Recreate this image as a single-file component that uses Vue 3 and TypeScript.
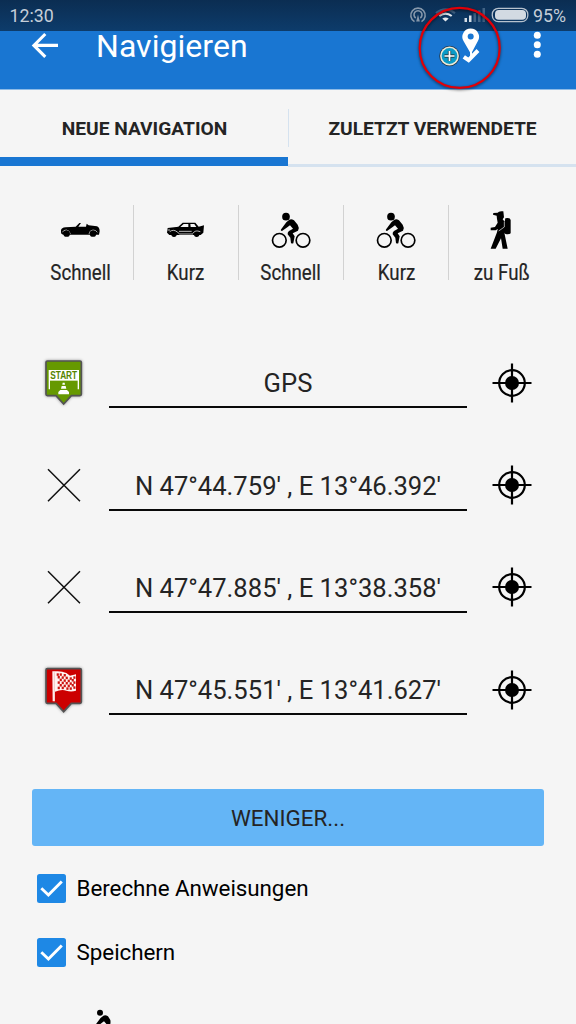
<script setup lang="ts">
import { ref } from 'vue'

type ModeIcon = 'cabrio' | 'sedan' | 'bike' | 'walk'
interface Mode { icon: ModeIcon; label: string }
interface Stop { kind: 'start' | 'via' | 'end'; text: string }
interface Option { label: string; checked: boolean }

const modes: Mode[] = [
  { icon: 'cabrio', label: 'Schnell' },
  { icon: 'sedan', label: 'Kurz' },
  { icon: 'bike', label: 'Schnell' },
  { icon: 'bike', label: 'Kurz' },
  { icon: 'walk', label: 'zu Fuß' },
]
const stops: Stop[] = [
  { kind: 'start', text: 'GPS' },
  { kind: 'via', text: "N 47°44.759' , E 13°46.392'" },
  { kind: 'via', text: "N 47°47.885' , E 13°38.358'" },
  { kind: 'end', text: "N 47°45.551' , E 13°41.627'" },
]
const options = ref<Option[]>([
  { label: 'Berechne Anweisungen', checked: true },
  { label: 'Speichern', checked: true },
])
const flagSquares = [
  [90, 69], [102, 71], [84, 77], [96, 78], [108, 79], [90, 85], [102, 87],
  [84, 93], [96, 94], [108, 95], [90, 101], [102, 103], [84, 109], [96, 109], [81, 69],
  [120, 81], [131, 78], [114, 88], [126, 86], [120, 96], [131, 93], [114, 103],
  [126, 101], [120, 111], [131, 108], [110, 111],
]
</script>

<template>
  <div class="screen">
    <div class="status">
      <span class="clock">12:30</span>
      <svg class="status-icons" viewBox="0 0 128 31" width="128" height="31">
        <g fill="none" stroke="#8798ab" stroke-width="1.6">
          <path d="M5.500 21.600A7.200 7.200 0 1 1 12.500 21.600M6.700 18A4 4 0 1 1 11.300 18" />
          <path d="M9 14.500 7.200 21.500H10.800Z" fill="#8798ab" stroke="none" />
        </g>
        <g fill="none" stroke-width="2.200">
          <path d="M27 13.200Q36.500 5.800 46 13.200" stroke="#3d5f82" />
          <path d="M30.300 16Q36.500 11.200 42.700 16" stroke="#e4e9ee" />
          <path d="M33.300 18.600Q36.500 16.400 39.700 18.600L36.500 21.500Z" fill="#e4e9ee" stroke="none" />
        </g>
        <path d="M55.500 18h2.500v4h-2.500z M60 15.500h2.500V22H60z" fill="#d3dce5" />
        <path d="M64.500 13H67v9h-2.500z M69 10.500h2.500V22H69z M73.500 8H76v14h-2.500z" fill="#416284" />
        <rect x="83.300" y="8.300" width="35.500" height="13.300" rx="6" fill="none" stroke="#b7c2ce" stroke-width="1.300" />
        <rect x="86" y="10" width="31" height="9.800" rx="3.800" fill="#d2dae2" />
      </svg>
      <span class="percent">95%</span>
    </div>

    <header class="bar">
      <svg class="back" viewBox="0 0 28 26" width="28" height="26">
        <path d="M27 13.400H3M14.300 2 2.900 13.400 14.300 24.800" fill="none" stroke="#fff" stroke-width="3.100" />
      </svg>
      <h1>Navigieren</h1>
      <svg class="more" viewBox="0 0 10 28" width="10" height="28">
        <circle cx="5.300" cy="4.200" r="3.500" /><circle cx="5.300" cy="13.700" r="3.500" /><circle cx="5.300" cy="23.200" r="3.500" />
      </svg>
    </header>

    <svg class="highlight" viewBox="0 0 100 100" width="100" height="100">
      <path d="M60.700 28.500A8.300 8.300 0 0 1 67.900 41L61 54 53.500 41A8.300 8.300 0 0 1 60.700 28.500Z" fill="#fff" />
      <circle cx="60.700" cy="36.600" r="3" fill="#1976d2" />
      <path d="M60.900 45 61.100 57" stroke="#fff" stroke-width="2" />
      <path d="M53.800 56.800 58.600 60.200 68 50.500" fill="none" stroke="#fff" stroke-width="4" />
      <circle cx="39.500" cy="56" r="10.300" fill="#243b4e" />
      <circle cx="39.500" cy="56" r="9.400" fill="#eee9d8" />
      <circle cx="39.500" cy="56" r="7.900" fill="#0b9bc8" />
      <path d="M39.500 51v10M34.500 56h10" stroke="#21424e" stroke-width="3.300" />
      <path d="M39.500 51v10M34.500 56h10" stroke="#fff" stroke-width="1.700" />
      <circle class="ring" cx="49.700" cy="47.900" r="40" fill="none" stroke="#e00008" stroke-width="2.200" />
    </svg>

    <nav class="tabs">
      <div class="tab active"><span>NEUE NAVIGATION</span></div>
      <div class="tab"><span>ZULETZT VERWENDETE</span></div>
    </nav>

    <section class="modes">
      <div v-for="(mode, i) in modes" :key="i" class="mode">
        <svg v-if="mode.icon === 'cabrio'" viewBox="61 48 120 114" width="40" height="38">
          <path d="M64 106Q65 98 78 97L108 95 119 84 124 84 116 95H139L141 86 147 91 172 94Q180 97 180 109L178 119H70L64 115Z" />
          <path d="M68 112Q71 105 80 105 90 106 92 117M148 117Q150 105 160 105 169 105 173 112" fill="none" stroke="#f5f5f5" stroke-width="2" />
          <circle cx="81" cy="116" r="9.500" /><circle cx="160" cy="116" r="9.500" />
        </svg>
        <svg v-else-if="mode.icon === 'sedan'" viewBox="379 48 120 114" width="40" height="38">
          <path d="M384 99 416 95 429 83H467L477 95 493 91 491 113 483 120H389L382 113Z" />
          <path d="M422 96 432 87H446V96ZM452 87H464L470 96H453Z" fill="#f5f5f5" />
          <path d="M384 105H391M390 110Q402 101 414 112L420 117H460M418 109H456M460 115Q466 104 482 110" fill="none" stroke="#f5f5f5" stroke-width="2.300" />
          <circle cx="403" cy="118" r="8" /><circle cx="471" cy="118" r="8" />
        </svg>
        <svg v-else-if="mode.icon === 'bike'" viewBox="92 48 120 114" width="40" height="38">
          <circle cx="137" cy="65" r="11.500" />
          <g fill="none" stroke="#000" stroke-width="5"><circle cx="117" cy="136" r="20.500" /><circle cx="188" cy="136" r="20.500" /></g>
          <path d="M138 82 147 74Q153 70 161 76L172 89Q178 98 173 107L157 115 163 124 159 145Q155 147 152 144L150 128 142 118Q141 112 146 108L158 101 149 91 141 97 125 108Q119 107 123 102Z" />
        </svg>
        <svg v-else viewBox="727 48 120 114" width="40" height="38">
          <path d="M761 54 774 53Q777 47 791 49L793 67 789 73 795 80 797 70Q811 67 813 75V115Q807 120 796 116L794 113 804 161H789L784 130 768 161H753L772 112 774 102 768 106H753V98L766 96 774 83 772 72 771 62 760 59Z" />
          <path d="M777 108 794 96M794 80V96" fill="none" stroke="#f5f5f5" stroke-width="2" />
        </svg>
        <span>{{ mode.label }}</span>
      </div>
    </section>

    <section class="stops">
      <div v-for="(stop, i) in stops" :key="i" class="stop">
        <svg v-if="stop.kind === 'start'" class="pin" viewBox="37 36 132 152" width="44" height="50.667">
          <path class="shape" d="M53 48H151Q155 48 155 52V148Q155 152 151 152H125L102 177 79 152H53Q49 152 49 148V52Q49 48 53 48Z" fill="#669900" stroke="#535353" />
          <path d="M59 133V77H146V133" fill="none" stroke="#fff" stroke-width="4" />
          <path d="M58 77H146V107H58Z" fill="#fff" />
          <text x="102" y="103" text-anchor="middle" textLength="81" lengthAdjust="spacingAndGlyphs">START</text>
          <path d="M99 113H105L106 119H98ZM96 123H108L110 131H94ZM92 135H112L118 141V148H86V141Z" fill="#fff" />
        </svg>
        <svg v-else-if="stop.kind === 'end'" class="pin" viewBox="37 44 132 152" width="44" height="50.667">
          <path class="shape" d="M53 55H151Q155 55 155 59V155Q155 159 151 159H125L102 184 79 159H53Q49 159 49 155V59Q49 55 53 55Z" fill="#cc0000" stroke="#535353" />
          <path d="M68 63H76Q95 61 110 68L121 76 139 72V121Q124 126 110 121 96 116 76 124V153H69Z" fill="#fff4f2" />
          <path d="M74 66V152" stroke="#e59994" stroke-width="1.500" />
          <rect v-for="([x, y], n) in flagSquares" :key="n" :x="x" :y="y" width="6.500" height="7.500" fill="#cc1511" />
        </svg>
        <svg v-else class="pin" viewBox="0 0 44 50.667" width="44" height="50.667">
          <path d="M6 9.300 38 41.300M38 9.300 6 41.300" stroke="#111" stroke-width="1.500" />
        </svg>
        <div class="field">{{ stop.text }}</div>
        <svg class="target" viewBox="-20 -20 40 40" width="40" height="40">
          <circle r="12.800" fill="none" stroke="#000" stroke-width="2.200" />
          <circle r="7" />
          <path d="M-19.500 0H19.500M0-19.500V19.500" stroke="#000" stroke-width="2.200" />
        </svg>
      </div>
    </section>

    <button class="less">WENIGER...</button>

    <section class="options">
      <label v-for="option in options" :key="option.label" class="option" @click="option.checked = !option.checked">
        <svg viewBox="0 0 29 29" width="29" height="29">
          <rect width="29" height="29" rx="2.500" fill="#1e88e5" />
          <path v-if="option.checked" d="M4.300 14.300 11.400 21 24.800 7.400" fill="none" stroke="#fff" stroke-width="2.900" />
        </svg>
        <span>{{ option.label }}</span>
      </label>
    </section>

    <svg class="next" viewBox="92 48 120 114" width="40" height="38">
      <circle cx="137" cy="65" r="9" />
      <path d="M138 82 147 74Q153 70 161 76L168 87Q170 98 165 107L157 115 142 118Q141 112 146 108L158 101 149 91 141 97 125 108Q119 107 123 102Z" />
    </svg>
  </div>
</template>

<style>
body { background: #f5f5f5; }
</style>

<style scoped>
.screen { position: relative; width: 576px; height: 1024px; overflow: hidden; background: #f5f5f5; color: #242424; font-family: Roboto, "Liberation Sans", sans-serif; }
svg { display: block; flex: none; }
.status { display: flex; height: 31px; box-sizing: border-box; padding-left: 9.500px; background: linear-gradient(#0b2d52, #0d3c6b); color: #c5ced8; font-size: 17.800px; line-height: 31px; }
.clock { width: 399.500px; }
.percent { margin-left: -4px; }
.bar { display: flex; height: 58px; border-bottom: 1px solid #8dbbe7; box-sizing: content-box; background: #1976d2; color: #fff; }
.back { margin: 1px 0 0 31px; }
h1 { width: 434px; margin: -3px 0 0 37px; font-size: 32px; font-weight: 400; line-height: 36px; letter-spacing: 0.050px; }
.more { margin: 0 0 0 2px; fill: #fff; }
.highlight { position: absolute; left: 410px; top: 0; }
.ring { filter: drop-shadow(0 1.500px 1.500px rgba(0, 0, 0, 0.6)); }
.tabs { display: flex; height: 76.500px; }
.tab { position: relative; display: flex; flex: 1; justify-content: center; box-sizing: border-box; border-bottom: 3px solid #d5e2ef; font-size: 19.200px; font-weight: 700; line-height: 78px; white-space: nowrap; }
.tab span { transform: translateX(0.5px); }
.tab.active { border-bottom: 9px solid #1976d2; height: 76px; }
.tab + .tab::before { content: ''; position: absolute; left: 0; top: 19px; width: 1px; height: 38px; background: #d5e2ef; }
.modes { display: grid; grid-template-columns: repeat(5, 105.300px); margin: 38.500px 0 0 28.300px; }
.mode { display: flex; flex-direction: column; align-items: center; box-sizing: border-box; height: 75px; padding-top: 6px; border-right: 1.500px solid #d2d2d2; font-size: 22.800px; }
.mode:last-child { border-color: transparent; }
.mode span { margin-top: 9px; line-height: 30px; transform: translateX(-0.3px) scaleX(0.82); white-space: nowrap; -webkit-text-stroke: 0.200px #242424; }
.stops { margin-top: 51.500px; }
.stop { display: flex; align-items: center; height: 102.400px; padding-left: 42px; }
.pin { overflow: visible; }
.pin .shape { stroke-width: 5; filter: drop-shadow(0 0 5px rgba(0, 0, 0, 0.4)); }
.pin text { fill: #558400; font: 700 30px "Liberation Sans", sans-serif; }
.field { box-sizing: border-box; width: 358px; height: 51px; margin-left: 23px; border-bottom: 2px solid #080808; font-size: 25.600px; line-height: 52px; text-align: center; }
.target { margin-left: 25px; }
.less { display: block; width: 512px; height: 57.500px; margin: 47.700px 0 0 32px; padding: 0; border: 0; border-radius: 3px; background: #64b5f6; color: #242424; font-family: inherit; font-size: 22.400px; line-height: 58px; }
.options { margin-top: 9.800px; padding-left: 36.600px; }
.option { display: flex; align-items: center; height: 64px; gap: 11px; color: #000; font-size: 22.400px; letter-spacing: -0.060px; }
.next { margin: 23px 0 0 84.500px; }
</style>
